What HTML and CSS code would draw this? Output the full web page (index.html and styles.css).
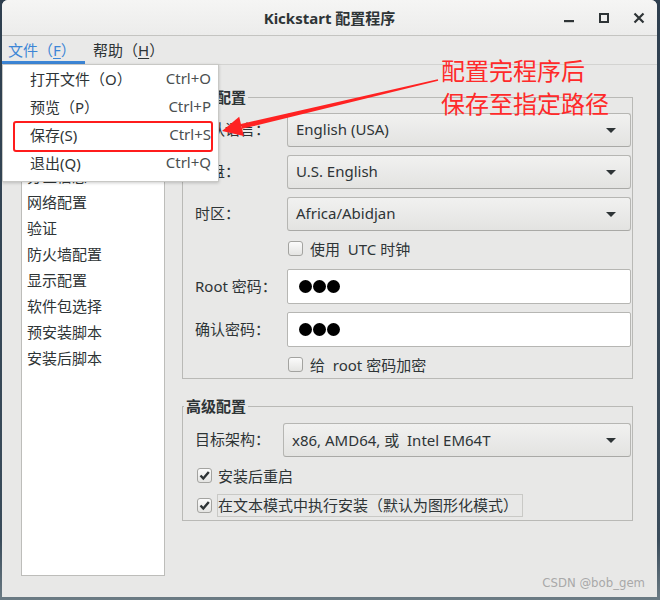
FILE: index.html
```html
<!DOCTYPE html>
<html lang="zh-CN">
  <head>
    <meta charset="UTF-8" />
    <meta name="viewport" content="width=device-width, initial-scale=1.0" />
    <title>Kickstart 配置程序</title>
    <link rel="stylesheet" href="styles.css">
  </head>
  <body>
    <div class="window">
      <!-- Title bar -->
      <div class="titlebar">
        <span></span>
        <span class="title">Kickstart 配置程序</span>
        <div class="controls">
          <span class="ctl"><svg width="12" height="12" viewBox="0 0 12 12"><rect x="1" y="8" width="10" height="2.2" fill="#2e3436"/></svg></span>
          <span class="ctl"><svg width="12" height="12" viewBox="0 0 12 12"><rect x="2" y="2" width="8" height="8" fill="none" stroke="#2e3436" stroke-width="2"/></svg></span>
          <span class="ctl"><svg width="12" height="12" viewBox="0 0 12 12"><path d="M1.5 1.5 L10.5 10.5 M10.5 1.5 L1.5 10.5" stroke="#2e3436" stroke-width="2.2"/></svg></span>
        </div>
      </div>

      <!-- Menu bar -->
      <div class="menubar">
        <span class="menu active">文件（<u>F</u>）</span>
        <span class="menu">帮助（<u>H</u>）</span>
      </div>

      <div class="body">
        <!-- Section list -->
        <ul class="nav">
          <li>基本配置</li>
          <li>安装方法</li>
          <li>引导装载程序选项</li>
          <li>分区信息</li>
          <li>网络配置</li>
          <li>验证</li>
          <li>防火墙配置</li>
          <li>显示配置</li>
          <li>软件包选择</li>
          <li>预安装脚本</li>
          <li>安装后脚本</li>
        </ul>

        <div class="forms">
          <!-- Basic config -->
          <fieldset class="frame basic">
            <legend>基本配置</legend>
            <span class="label">默认语言：</span>
            <div class="combo"><span>English (USA)</span><i class="caret"></i></div>
            <span class="label">键盘：</span>
            <div class="combo"><span>U.S. English</span><i class="caret"></i></div>
            <span class="label">时区：</span>
            <div class="combo"><span>Africa/Abidjan</span><i class="caret"></i></div>
            <span></span>
            <div class="check"><span class="box"></span><span>使用&nbsp; UTC 时钟</span></div>
            <span class="label">Root 密码：</span>
            <div class="entry"><i class="dot"></i><i class="dot"></i><i class="dot"></i></div>
            <span class="label">确认密码：</span>
            <div class="entry"><i class="dot"></i><i class="dot"></i><i class="dot"></i></div>
            <span></span>
            <div class="check"><span class="box"></span><span>给&nbsp; root 密码加密</span></div>
          </fieldset>

          <!-- Advanced config -->
          <fieldset class="frame adv">
            <legend>高级配置</legend>
            <span class="label">目标架构：</span>
            <div class="combo"><span>x86, AMD64, 或&nbsp; Intel EM64T</span><i class="caret"></i></div>
            <div class="check wide">
              <span class="box on"><svg width="13" height="13" viewBox="0 0 13 13"><path d="M2.5 6.5 L5.3 9.5 L10.8 3" fill="none" stroke="#2e3436" stroke-width="2.4"/></svg></span>
              <span>安装后重启</span>
            </div>
            <div class="check wide">
              <span class="box on"><svg width="13" height="13" viewBox="0 0 13 13"><path d="M2.5 6.5 L5.3 9.5 L10.8 3" fill="none" stroke="#2e3436" stroke-width="2.4"/></svg></span>
              <span class="focus">在文本模式中执行安装（默认为图形化模式）</span>
            </div>
          </fieldset>
        </div>
      </div>

      <!-- Open File menu -->
      <div class="popup">
        <div class="item"><span>打开文件（O）</span><span class="accel">Ctrl+O</span></div>
        <div class="item"><span>预览（P）</span><span class="accel">Ctrl+P</span></div>
        <div class="item"><span>保存(S)</span><span class="accel">Ctrl+S</span></div>
        <div class="item"><span>退出(Q)</span><span class="accel">Ctrl+Q</span></div>
      </div>

      <!-- annotation -->
      <div class="redbox"></div>
      <div class="callout">配置完程序后<br>保存至指定路径</div>
      <svg class="arrow" width="660" height="600" viewBox="0 0 660 600">
        <polygon points="438.2,80.8 437.8,79.2 240.9,124 242.1,128.8" fill="#ff2222"/>
        <polygon points="222,131 239.2,116.7 243.8,136.1" fill="#ff2222"/>
      </svg>
      <div class="watermark">CSDN @bob_gem</div>
    </div>
  </body>
</html>
```

FILE: styles.css
```css
/* Reset */
* {
  margin: 0;
  padding: 0;
  box-sizing: border-box;
}

html,
body {
  width: 660px;
  height: 600px;
  overflow: hidden;
}

body {
  background: linear-gradient(#2e3f4f, #3a4c5b 90%, #6b7b84);
  font-family: "Noto Sans", "Noto Sans CJK SC", sans-serif;
  font-size: 15px;
  color: #2e3436;
}

/* Window frame */
.window {
  position: relative;
  margin-left: 2px;
  width: 655px;
  height: 597px;
  background: #e8e8e7;
  border-radius: 6px 6px 0 0;
  overflow: hidden;
}

.titlebar {
  height: 36px;
  display: grid;
  grid-template-columns: 1fr auto 1fr;
  align-items: center;
  background: linear-gradient(#f5f5f4, #ececeb);
  border-bottom: 1px solid #c4c4c1;
}

.title {
  font-weight: bold;
  font-size: 15px;
  color: #2e3436;
  padding-bottom: 1px;
}

.controls {
  display: flex;
  justify-content: flex-end;
  padding-right: 1px;
}

.ctl {
  width: 35px;
  height: 34px;
  display: flex;
  align-items: center;
  justify-content: center;
}

/* Menu bar */
.menubar {
  height: 29px;
  display: flex;
  background: #e9e9e8;
  border-bottom: 1px solid #d3d3d1;
}

.menu {
  display: flex;
  align-items: center;
  padding: 0 8px;
  line-height: 1;
}

.menu u {
  text-decoration-thickness: 1px;
  text-underline-offset: 2px;
}

.menu.active {
  width: 83px;
  padding-left: 6px;
  color: #3d86d6;
  border-bottom: 3px solid #3d86d6;
  padding-top: 3px;
}

/* Main area */
.body {
  display: flex;
  gap: 17px;
  padding: 21px 0 0 19px;
}

.nav {
  list-style: none;
  width: 144px;
  height: 490px;
  background: #fff;
  border: 1px solid #bdbdba;
  border-top: none;
}

.nav li {
  height: 26px;
  line-height: 24px;
  padding-left: 5px;
  white-space: nowrap;
}

.forms {
  width: 451px;
}

/* Frames */
.frame {
  border: 1px solid #b9b9b6;
  display: grid;
  align-items: center;
  padding: 5px 1px 1px 12px;
}

.frame legend {
  font-weight: bold;
  line-height: 22px;
  padding: 0 2px;
  margin-left: -11px;
}

.basic {
  grid-template-columns: 92px 1fr;
  grid-template-rows: 34px 34px 34px 22px 35px 35px 22px;
  row-gap: 8px;
}

.adv {
  margin-top: 16px;
  grid-template-columns: 88px 1fr;
  grid-template-rows: 38px 29px 30px;
  padding: 6px 1px 0 12px;
}

.adv .combo,
.adv .label {
  margin-bottom: 4px;
}

.label {
  white-space: nowrap;
  padding-bottom: 3px;
}

/* Combo boxes */
.combo {
  height: 34px;
  display: flex;
  align-items: center;
  justify-content: space-between;
  padding: 0 14px 2px 8px;
  border: 1px solid #b6b6b3;
  border-bottom-color: #a9a9a6;
  border-radius: 3px;
  background: linear-gradient(#f1f1f0, #e3e3e1);
  white-space: nowrap;
}

.caret {
  width: 0;
  height: 0;
  margin-top: 2px;
  border-left: 5px solid transparent;
  border-right: 5px solid transparent;
  border-top: 5px solid #2e3436;
}

/* Text entries */
.entry {
  height: 35px;
  display: flex;
  align-items: center;
  gap: 1px;
  padding-left: 11px;
  background: #fff;
  border: 1px solid #b6b6b3;
  border-radius: 2px;
}

.dot {
  width: 13px;
  height: 13px;
  border-radius: 50%;
  background: #000;
}

/* Check buttons */
.check {
  display: flex;
  align-items: center;
  gap: 7px;
  padding-left: 1px;
  white-space: nowrap;
}

.basic .check {
  align-self: start;
  height: 18px;
}

.check.wide {
  grid-column: 1 / 3;
  padding-left: 2px;
  gap: 6px;
}

.box {
  width: 15px;
  height: 15px;
  border: 1px solid #a3a3a0;
  border-radius: 3px;
  background: linear-gradient(#fbfbfb, #e4e4e2);
  display: flex;
  align-items: center;
  justify-content: center;
}

.focus {
  border: 1px solid #c9c9c6;
  padding: 0 4px 0 0;
  line-height: 21px;
  margin-left: -1px;
}

/* Popup menu */
.popup {
  position: absolute;
  top: 64px;
  left: 0;
  width: 217px;
  height: 118px;
  background: #fff;
  border: 1px solid #c8c8c5;
  box-shadow: 0 1px 3px rgba(0, 0, 0, 0.2);
}

.item {
  height: 28px;
  display: flex;
  align-items: center;
  justify-content: space-between;
  padding: 0 7px 2px 27px;
}

.accel {
  color: #4a4f51;
}

/* Annotation */
.redbox {
  position: absolute;
  top: 121px;
  left: 11px;
  width: 200px;
  height: 31px;
  border: 2px solid #ff1c1c;
  border-radius: 3px;
}

.callout {
  position: absolute;
  top: 53px;
  left: 439px;
  font-size: 24px;
  line-height: 33px;
  color: #ff2a2a;
  font-family: "Noto Sans CJK SC", sans-serif;
}

.arrow {
  position: absolute;
  top: 0;
  left: -2px;
  pointer-events: none;
}

.watermark {
  position: absolute;
  right: 12px;
  top: 575px;
  font-family: "DejaVu Sans Condensed", "DejaVu Sans", sans-serif;
  font-size: 13px;
  color: #a9a9a9;
}
```
